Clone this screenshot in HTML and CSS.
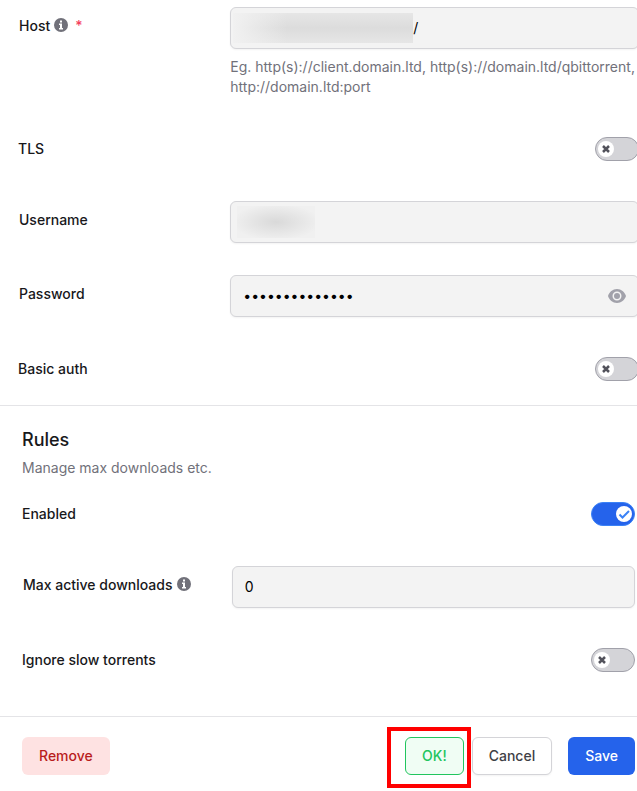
FILE: index.html
```html
<!DOCTYPE html>
<html lang="en">
<head>
<meta charset="utf-8">
<meta name="viewport" content="width=device-width, initial-scale=1">
<title>Download client</title>
<link rel="stylesheet" href="styles.css">
</head>
<body>
<form class="panel">
  <section class="group connection">
    <div class="row">
      <div class="label"><label for="host">Host</label>
        <svg class="info" viewBox="0 0 14 14" aria-hidden="true"><circle cx="7" cy="7" r="7"/><path d="M6 2.500h2v2H6zM5 5.500h3v4.500h1v1.500H5V10h1V7H5z"/></svg>
        <span class="required">*</span></div>
      <div>
        <div class="field">
          <span class="redacted redacted-host"></span>
          <input id="host" type="text" value="/">
        </div>
        <p class="help">Eg. http(s)://client.domain.ltd, http(s)://domain.ltd/qbittorrent, http://domain.ltd:port</p>
      </div>
    </div>
    <div class="row toggle-row">
      <label for="tls">TLS</label>
      <span class="switch"><input id="tls" type="checkbox"><svg class="mark" viewBox="0 0 16 16" aria-hidden="true"><path d="M5 5l6 6M11 5l-6 6"/></svg></span>
    </div>
    <div class="row">
      <div class="label"><label for="username">Username</label></div>
      <div class="field">
        <span class="redacted redacted-user"></span>
        <input id="username" type="text">
      </div>
    </div>
    <div class="row">
      <div class="label"><label for="password">Password</label></div>
      <div class="field padded">
        <input id="password" type="password" value="abcdefghijklmn">
        <button class="reveal" type="button" aria-label="Show password"><svg viewBox="0 0 20 20" aria-hidden="true"><path fill-rule="evenodd" d="M1 10C2.300 6 5.700 3 10 3S17.700 6 19 10C17.700 14 14.300 17 10 17S2.300 14 1 10zM14.500 10a4.500 4.500 0 1 0-9 0 4.500 4.500 0 0 0 9 0z"/><circle cx="10" cy="10" r="3"/></svg></button>
      </div>
    </div>
    <div class="row toggle-row">
      <label for="basic">Basic auth</label>
      <span class="switch"><input id="basic" type="checkbox"><svg class="mark" viewBox="0 0 16 16" aria-hidden="true"><path d="M5 5l6 6M11 5l-6 6"/></svg></span>
    </div>
  </section>

  <section class="group rules">
    <h2>Rules</h2>
    <p class="subtitle">Manage max downloads etc.</p>
    <div class="row toggle-row">
      <label for="enabled">Enabled</label>
      <span class="switch"><input id="enabled" type="checkbox" checked><svg class="mark" viewBox="0 0 16 16" aria-hidden="true"><path d="M3.500 8.500l3 3 6.500-6.500"/></svg></span>
    </div>
    <div class="row">
      <div class="label"><label for="max">Max active downloads</label>
        <svg class="info" viewBox="0 0 14 14" aria-hidden="true"><circle cx="7" cy="7" r="7"/><path d="M6 2.500h2v2H6zM5 5.500h3v4.500h1v1.500H5V10h1V7H5z"/></svg></div>
      <div class="field padded"><input id="max" type="text" inputmode="numeric" value="0"></div>
    </div>
    <div class="row toggle-row">
      <label for="slow">Ignore slow torrents</label>
      <span class="switch"><input id="slow" type="checkbox"><svg class="mark" viewBox="0 0 16 16" aria-hidden="true"><path d="M5 5l6 6M11 5l-6 6"/></svg></span>
    </div>
  </section>

  <footer class="actions">
    <button class="btn remove" type="button">Remove</button>
    <span class="highlighted"><button class="btn ok" type="button">OK!</button></span>
    <button class="btn cancel" type="button">Cancel</button>
    <button class="btn save" type="submit">Save</button>
  </footer>
</form>
</body>
</html>
```
FILE: styles.css
```css
* { box-sizing: border-box; }

body {
  margin: 0;
  background: #fff;
  color: #18181b;
  font: 500 14px/20px Inter, "Liberation Sans", sans-serif;
}

h2, p { margin: 0; }

button, input { font: inherit; color: inherit; }

.panel { overflow: hidden; }

.group { border-bottom: 1px solid #e4e4e7; }

.connection { padding-left: 18px; }
.connection .row { margin-right: -2px; }
.connection .row:first-child { padding-top: 7px; }

.rules { padding: 20px 2px 20px 22px; }

.row {
  display: grid;
  grid-template-columns: 1fr 2fr;
  column-gap: 8px;
  padding: 16px 0;
}

.toggle-row {
  display: flex;
  justify-content: space-between;
  align-items: center;
  padding: 24px 0;
}

.label {
  display: flex;
  align-items: center;
  gap: 4px;
  height: 38px;
  padding-left: 1px;
}

.info { width: 14px; height: 14px; margin-bottom: 2px; fill: #71717a; }
.info path { fill: #fff; }

.required { margin-left: 3px; color: #f43f5e; }

.field {
  display: flex;
  align-items: center;
  height: 42px;
  padding: 0 2px;
  border: 1px solid #d4d4d8;
  border-radius: 6px;
  background: #f3f3f3;
  box-shadow: 0 1px 2px rgba(0, 0, 0, 0.05);
}

.field.padded { padding: 0 11px 0 12px; }

.field input {
  flex: 1;
  min-width: 0;
  padding: 0;
  border: 0;
  outline: 0;
  background: transparent;
  color: #000;
  font-weight: 400;
}

.redacted-host {
  width: 180px;
  height: 30px;
  background: linear-gradient(90deg, #f1f1f1, transparent 30%), linear-gradient(#e6e6e6, #dcdcdc 50%, #e6e6e6);
}

.redacted-user {
  width: 78px;
  height: 32px;
  margin-left: 4px;
  background: radial-gradient(ellipse, #d9d9d9, #f0f0f0 80%);
}

.help {
  margin-top: 8px;
  color: #71717a;
  font-weight: 400;
}

.reveal {
  display: flex;
  padding: 0;
  border: 0;
  background: none;
}

.reveal svg { width: 20px; height: 20px; fill: #a1a1aa; }

.switch { display: grid; align-items: center; }

.switch input, .mark { grid-area: 1 / 1; }

.switch input {
  width: 44px;
  height: 24px;
  margin: 0;
  appearance: none;
  border: 1px solid #a1a1aa;
  border-radius: 12px;
  background: #d4d4d8;
}

.mark {
  width: 16px;
  height: 16px;
  margin: 0 3px;
  border-radius: 50%;
  background: #fff;
  fill: none;
  stroke: #52525b;
  stroke-width: 2.5;
  pointer-events: none;
}

.switch input:checked { border-color: #3b82f6; background: #2563eb; }

.switch input:checked + .mark {
  justify-self: end;
  stroke: #3b82f6;
  stroke-width: 2;
}

h2 { font-size: 18px; line-height: 28px; font-weight: 500; }

.subtitle { margin-top: 4px; color: #71717a; font-weight: 400; }

.actions {
  display: flex;
  align-items: center;
  padding: 20px 2px 16px 22px;
}

.btn {
  height: 38px;
  padding: 0 16px;
  border: 1px solid transparent;
  border-radius: 6px;
}

.remove { margin-right: auto; background: #fee2e2; color: #b91c1c; }

.highlighted { position: relative; display: flex; }

.highlighted::after {
  content: "";
  position: absolute;
  inset: -10px -7px -13px -18px;
  border: 4px solid #f00;
  pointer-events: none;
}

.ok { border-color: #22c55e; background: #f0fdf4; color: #22c55e; }

.cancel {
  margin: 0 16px 0 8px;
  border-color: #d4d4d8;
  background: #fff;
  color: #3f3f46;
  box-shadow: 0 1px 2px rgba(0, 0, 0, 0.05);
}

.save { background: #2563eb; color: #fff; }
```
